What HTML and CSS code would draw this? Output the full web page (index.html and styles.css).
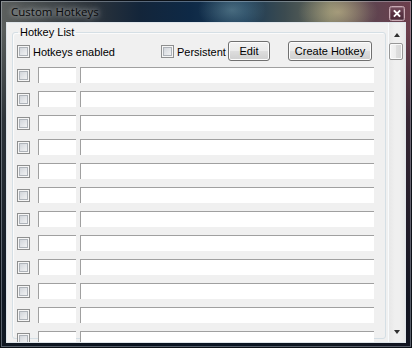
FILE: index.html
```html
<!DOCTYPE html>
<html>
<head>
<meta charset="utf-8">
<link rel="stylesheet" href="styles.css">
</head>
<body>
<div class="window">
  <div class="titlebar">
    <span class="title">Custom Hotkeys</span>
    <button class="close" aria-label="Close">
      <svg width="16" height="15" viewBox="0 0 16 15">
        <defs>
          <linearGradient id="cg" x1="0" y1="0" x2="0" y2="1">
            <stop offset="0" stop-color="#7a5060"/>
            <stop offset="0.5" stop-color="#5a3444"/>
            <stop offset="1" stop-color="#4a2a38"/>
          </linearGradient>
        </defs>
        <rect x="0.5" y="0.5" width="15" height="14" rx="2" fill="url(#cg)" stroke="#c9aab4"/>
        <rect x="1.5" y="1.5" width="13" height="12" rx="1" fill="none" stroke="rgba(255,255,255,0.18)"/>
        <path d="M5.5 5 L10.5 10 M10.5 5 L5.5 10" stroke="#ffffff" stroke-width="1.8" stroke-linecap="square"/>
      </svg>
    </button>
  </div>
  <div class="client">
    <div class="pane">
      <fieldset class="group">
        <legend>Hotkey List</legend>
        <div class="toolbar">
          <label class="check enabled"><span class="cb"></span><span class="txt">Hotkeys enabled</span></label>
          <label class="check persist"><span class="cb"></span><span class="txt">Persistent</span></label>
          <button class="btn edit">Edit</button>
          <button class="btn create">Create Hotkey</button>
        </div>
        <div class="rows">
          <div class="row"><span class="cb"></span><span class="field key"></span><span class="field cmd"></span></div>
          <div class="row"><span class="cb"></span><span class="field key"></span><span class="field cmd"></span></div>
          <div class="row"><span class="cb"></span><span class="field key"></span><span class="field cmd"></span></div>
          <div class="row"><span class="cb"></span><span class="field key"></span><span class="field cmd"></span></div>
          <div class="row"><span class="cb"></span><span class="field key"></span><span class="field cmd"></span></div>
          <div class="row"><span class="cb"></span><span class="field key"></span><span class="field cmd"></span></div>
          <div class="row"><span class="cb"></span><span class="field key"></span><span class="field cmd"></span></div>
          <div class="row"><span class="cb"></span><span class="field key"></span><span class="field cmd"></span></div>
          <div class="row"><span class="cb"></span><span class="field key"></span><span class="field cmd"></span></div>
          <div class="row"><span class="cb"></span><span class="field key"></span><span class="field cmd"></span></div>
          <div class="row"><span class="cb"></span><span class="field key"></span><span class="field cmd"></span></div>
          <div class="row"><span class="cb"></span><span class="field key"></span><span class="field cmd"></span></div>
          <div class="row"><span class="cb"></span><span class="field key"></span><span class="field cmd"></span></div>
        </div>
      </fieldset>
    </div>
    <div class="scrollbar">
      <div class="sb-up"><span class="tri up"></span></div>
      <div class="thumb"></div>
      <div class="track"></div>
      <div class="sb-down"><span class="tri down"></span></div>
    </div>
  </div>
</div>
</body>
</html>
```

FILE: styles.css
```css
* { box-sizing: border-box; }

html, body {
  margin: 0;
  padding: 0;
  width: 412px;
  height: 348px;
  overflow: hidden;
  background: #101a26;
}

.window {
  width: 412px;
  height: 348px;
  padding: 0 6px 5px 6px;
  display: flex;
  flex-direction: column;
  background:
    linear-gradient(180deg, rgba(0,0,0,0) 0px, rgba(0,0,0,0) 30px, rgba(8,16,28,0.55) 120px, rgba(8,16,28,0.9) 300px),
    radial-gradient(ellipse 40px 24px at 338px 12px, rgba(215,200,150,0.55), rgba(215,200,150,0) 100%),
    radial-gradient(ellipse 34px 22px at 232px 10px, rgba(130,170,180,0.45), rgba(130,170,180,0) 100%),
    radial-gradient(ellipse 60px 8px at 200px 346px, rgba(90,130,170,0.45), rgba(90,130,170,0) 100%),
    linear-gradient(90deg, #5c605e 0px, #4a4f50 30px, #2d343b 90px, #13253a 140px, #0e2946 190px, #1b3b57 245px, #3c4b50 285px, #6b6c5c 330px, #5d4450 370px, #6d3e4c 412px);
  box-shadow: inset 0 0 0 1px #0b1016, inset 0 0 0 2px rgba(220,230,240,0.35);
  font-family: "Liberation Sans", Arial, sans-serif;
  font-size: 11px;
  color: #000;
}

.titlebar {
  height: 22px;
  display: flex;
  align-items: flex-start;
  justify-content: space-between;
  padding-left: 5px;
}

.title {
  font-family: "Open Sans", "Noto Sans", sans-serif;
  font-size: 11.5px;
  line-height: 22px;
  margin-top: 1px;
  color: #0a0a0a;
  text-shadow: 0 0 5px rgba(235,240,245,0.8), 0 0 11px rgba(235,240,245,0.55);
}

.close {
  margin: 6px 1px 0 0;
  padding: 0;
  border: 0;
  background: none;
  width: 16px;
  height: 15px;
  display: block;
}
.close svg { display: block; }

.client {
  flex: 1;
  min-height: 0;
  display: flex;
  border: 1px solid #dfe5ea;
  background: #f0f0f0;
}

.pane {
  flex: 1;
  min-width: 0;
  display: flex;
  flex-direction: column;
  padding: 3px 2px 3px 5px;
  overflow: hidden;
}

.group {
  flex: 1;
  min-height: 0;
  margin: 0;
  padding: 2px 10px 0 4px;
  border: 1px solid #d5dfe5;
  border-radius: 3px;
  box-shadow: inset 1px 1px 0 #fbfbfb;
}

.group legend {
  padding: 0 2px;
  margin-left: 1px;
  line-height: 13px;
  font-size: 11px;
}

.toolbar {
  display: flex;
  align-items: flex-start;
  height: 20px;
}

.check {
  display: flex;
  align-items: flex-start;
  margin-top: 4px;
  white-space: nowrap;
}
.check .txt {
  line-height: 13px;
  margin-top: 1px;
  margin-left: 3px;
}
.enabled { width: 144px; }
.persist { width: 67px; }

.cb {
  display: block;
  flex: none;
  width: 13px;
  height: 13px;
  border: 1px solid #8e8f8f;
  background: linear-gradient(135deg, #c9ced4 0%, #e4e6e9 55%, #f8f8f8 100%);
  box-shadow: inset 0 0 0 1px #f6f6f6, inset 0 0 0 2px #aeb3b9;
}

.btn {
  height: 20px;
  padding: 0;
  border: 1px solid #707070;
  border-radius: 3px;
  background: linear-gradient(180deg, #f2f2f2 0%, #ebebeb 48%, #dddddd 52%, #cfcfcf 100%);
  box-shadow: inset 0 0 0 1px #fcfcfc;
  font-family: "Liberation Sans", Arial, sans-serif;
  font-size: 11px;
  line-height: 13px;
  color: #000;
}
.edit { width: 42px; }
.create { width: 84px; margin-left: 18px; }

.rows {
  display: flex;
  flex-direction: column;
  gap: 8px;
  margin-top: 6px;
}

.row {
  display: flex;
  align-items: flex-start;
  height: 16px;
}
.row .cb { margin-top: 2px; margin-right: 8px; }

.field {
  display: block;
  height: 16px;
  background: #fff;
  border-top: 1px solid #a0a0a0;
  border-left: 1px solid #a0a0a0;
}
.key { width: 38px; margin-right: 4px; }
.cmd { width: 294px; }

.scrollbar {
  width: 17px;
  flex: none;
  display: flex;
  flex-direction: column;
  background: linear-gradient(90deg, #e6e6e6 0%, #efefef 40%, #efefef 70%, #e8e8e8 100%);
  box-shadow: inset 1px 0 0 #f8fbfd;
}

.sb-up {
  height: 20px;
  display: flex;
  justify-content: center;
  align-items: flex-end;
  padding-bottom: 6px;
  padding-left: 1px;
}
.sb-down {
  height: 20px;
  display: flex;
  justify-content: center;
  align-items: flex-start;
  padding-top: 8px;
  padding-left: 1px;
}
.track { flex: 1; }

.tri {
  width: 0;
  height: 0;
  border-left: 3.5px solid transparent;
  border-right: 3.5px solid transparent;
}
.tri.up { border-bottom: 4px solid #303030; }
.tri.down { border-top: 4px solid #303030; }

.thumb {
  height: 17px;
  margin: 0 2px 0 1px;
  border: 1px solid #979797;
  border-radius: 2px;
  background: linear-gradient(90deg, #f4f4f4 0%, #ececec 50%, #dedede 51%, #d6d6d6 100%);
  box-shadow: inset 0 0 0 1px #fafafa;
}
```
